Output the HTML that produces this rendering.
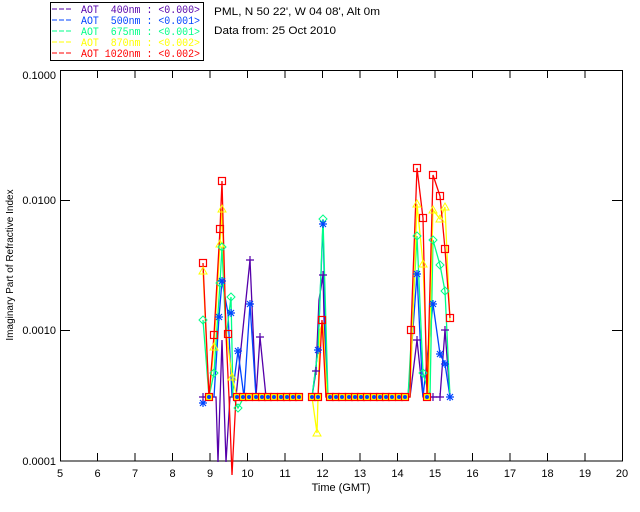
<!DOCTYPE html>
<html><head><meta charset="utf-8"><style>
html,body{margin:0;padding:0;background:#fff;}
svg{display:block;font-family:"Liberation Sans",sans-serif;}
</style></head><body>
<svg width="640" height="512" viewBox="0 0 640 512" xmlns="http://www.w3.org/2000/svg">
<defs>
<g id="sq"><rect x="-3.5" y="-3.5" width="7" height="7" fill="none" stroke="#f00" stroke-width="1.2"/></g>
<g id="tri"><path d="M0,-4 L4,3 L-4,3 Z" fill="none" stroke="#ff0" stroke-width="1"/></g>
<g id="dia"><path d="M0,-4 L4,0 L0,4 L-4,0 Z" fill="none" stroke="#0f8" stroke-width="1"/></g>
<g id="star"><path d="M-4,0 H4 M0,-4 V4 M-3,-3 L3,3 M-3,3 L3,-3" stroke="#04f" stroke-width="1.2"/></g>
<g id="plus"><path d="M-4,0 H4 M0,-4 V4" stroke="#50a" stroke-width="1.2"/></g>
<g id="base"><rect x="-3.5" y="-3.5" width="7" height="7" fill="#ff0" stroke="#f00" stroke-width="1.2"/><circle r="2" fill="#04f"/></g>
</defs>
<!-- legend -->
<rect x="50.5" y="2.5" width="153" height="58" fill="none" stroke="#000"/>
<g font-size="11" font-family="Liberation Mono, monospace">
<line x1="52" y1="9" x2="73" y2="9" stroke="#50a" stroke-dasharray="5,2"/>
<text x="81" y="13" fill="#50a" xml:space="preserve" textLength="119" lengthAdjust="spacingAndGlyphs">AOT  400nm : &lt;0.000&gt;</text>
<line x1="52" y1="20" x2="73" y2="20" stroke="#04f" stroke-dasharray="5,2"/>
<text x="81" y="24" fill="#04f" xml:space="preserve" textLength="119" lengthAdjust="spacingAndGlyphs">AOT  500nm : &lt;0.001&gt;</text>
<line x1="52" y1="31" x2="73" y2="31" stroke="#0f8" stroke-dasharray="5,2"/>
<text x="81" y="35" fill="#0f8" xml:space="preserve" textLength="119" lengthAdjust="spacingAndGlyphs">AOT  675nm : &lt;0.001&gt;</text>
<line x1="52" y1="42" x2="73" y2="42" stroke="#ff0" stroke-dasharray="5,2"/>
<text x="81" y="46" fill="#ff0" xml:space="preserve" textLength="119" lengthAdjust="spacingAndGlyphs">AOT  870nm : &lt;0.002&gt;</text>
<line x1="52" y1="53" x2="73" y2="53" stroke="#f00" stroke-dasharray="5,2"/>
<text x="81" y="57" fill="#f00" xml:space="preserve" textLength="119" lengthAdjust="spacingAndGlyphs">AOT 1020nm : &lt;0.002&gt;</text>
</g>
<g font-size="11">
<text x="214" y="15" fill="#000" textLength="166" lengthAdjust="spacingAndGlyphs">PML, N 50 22', W 04 08', Alt 0m</text>
<text x="214" y="34" fill="#000" textLength="122" lengthAdjust="spacingAndGlyphs">Data from: 25 Oct 2010</text>
</g>
<!-- axes -->
<rect x="60.5" y="70.5" width="562" height="390.5" fill="none" stroke="#000" stroke-width="1"/>
<g stroke="#000">
<path d="M97.5,461 v-8 M135,461 v-8 M172.5,461 v-8 M210,461 v-8 M247.5,461 v-8 M285,461 v-8 M322.5,461 v-8 M360,461 v-8 M397.5,461 v-8 M435,461 v-8 M472.5,461 v-8 M510,461 v-8 M547.5,461 v-8 M585,461 v-8"/>
<path d="M97.5,70 v8 M135,70 v8 M172.5,70 v8 M210,70 v8 M247.5,70 v8 M285,70 v8 M322.5,70 v8 M360,70 v8 M397.5,70 v8 M435,70 v8 M472.5,70 v8 M510,70 v8 M547.5,70 v8 M585,70 v8"/>
<path d="M60,200.5 h10 M60,330.5 h10 M622,200.5 h-10 M622,330.5 h-10"/>
</g>
<g font-size="11" fill="#000" text-anchor="end">
<text x="56" y="79">0.1000</text><text x="56" y="204">0.0100</text><text x="56" y="334">0.0010</text><text x="56" y="465">0.0001</text>
</g>
<g font-size="11" fill="#000" text-anchor="middle">
<text x="60" y="477">5</text><text x="97.5" y="477">6</text><text x="135" y="477">7</text><text x="172.5" y="477">8</text><text x="210" y="477">9</text><text x="247.5" y="477">10</text><text x="285" y="477">11</text><text x="322.5" y="477">12</text><text x="360" y="477">13</text><text x="397.5" y="477">14</text><text x="435" y="477">15</text><text x="472.5" y="477">16</text><text x="510" y="477">17</text><text x="547.5" y="477">18</text><text x="585" y="477">19</text><text x="622" y="477">20</text>
<text x="341" y="491">Time (GMT)</text>
<text transform="translate(13,265) rotate(-90)" font-size="10">Imaginary Part of Refractive Index</text>
</g>
<!-- data -->
<g fill="none" stroke-width="1.3">
<polyline stroke="#50a" points="203,397 216,397 218,462 222,340 226,462 230,397 236,397 250,260 256,397 260,337 266,397 300,397"/>
<polyline stroke="#50a" points="312,397 316,371 319,300 323,275 326,397 410,397 417,340 423,397 440,397 445,330 450,397"/>
<polyline stroke="#04f" points="203,403 210,397 214,397 219,317 222,281 228,313 232,397 238,351 244,397 250,304 256,397 300,397"/>
<polyline stroke="#04f" points="312,397 318,350 323,224 327,397 408,397 417,274 423,397 433,304 440,354 445,364 450,397"/>
<polyline stroke="#0f8" points="203,320 209,397 214,373 220,283 222,247 226,338 231,297 233,397 238,408 244,397 300,397"/>
<polyline stroke="#0f8" points="312,397 318,350 323,219 328,397 408,397 417,236 423,373 430,397 433,240 440,265 445,291 450,397"/>
<polyline stroke="#ff0" points="203,271 209,397 214,347 220,244 222,209 226,330 232,377 237,397 300,397"/>
<polyline stroke="#ff0" points="312,397 317,433 320,330 323,322 327,397 410,397 417,204 423,264 428,397 433,210 440,219 445,207 450,322"/>
<polyline stroke="#f00" points="203,263 209,397 214,335 220,229 222,181 226,334 229,397 232,475 236,397 300,397"/>
<polyline stroke="#f00" points="312,397 318,397 322,320 326,397 410,397 411,330 417,168 423,218 427,397 433,175 440,196 445,249 450,318"/>
</g>
<!-- markers -->
<g>
<use href="#sq" x="203" y="263"/><use href="#sq" x="214" y="335"/><use href="#sq" x="220" y="229"/><use href="#sq" x="222" y="181"/><use href="#sq" x="228" y="334"/><use href="#sq" x="322" y="320"/>
<use href="#sq" x="411" y="330"/><use href="#sq" x="417" y="168"/><use href="#sq" x="423" y="218"/><use href="#sq" x="433" y="175"/><use href="#sq" x="440" y="196"/><use href="#sq" x="445" y="249"/><use href="#sq" x="450" y="318"/>
<use href="#tri" x="203" y="271"/><use href="#tri" x="214" y="347"/><use href="#tri" x="220" y="244"/><use href="#tri" x="222" y="209"/><use href="#tri" x="232" y="377"/><use href="#tri" x="317" y="433"/>
<use href="#tri" x="417" y="204"/><use href="#tri" x="423" y="264"/><use href="#tri" x="433" y="210"/><use href="#tri" x="440" y="219"/><use href="#tri" x="445" y="207"/>
<use href="#dia" x="203" y="320"/><use href="#dia" x="214" y="373"/><use href="#dia" x="220" y="283"/><use href="#dia" x="222" y="247"/><use href="#dia" x="231" y="297"/><use href="#dia" x="238" y="408"/><use href="#dia" x="323" y="219"/>
<use href="#dia" x="417" y="236"/><use href="#dia" x="423" y="373"/><use href="#dia" x="433" y="240"/><use href="#dia" x="440" y="265"/><use href="#dia" x="445" y="291"/>
<use href="#star" x="203" y="403"/><use href="#star" x="219" y="317"/><use href="#star" x="222" y="281"/><use href="#star" x="231" y="313"/><use href="#star" x="238" y="351"/><use href="#star" x="250" y="304"/><use href="#star" x="318" y="350"/><use href="#star" x="323" y="224"/>
<use href="#star" x="417" y="274"/><use href="#star" x="433" y="304"/><use href="#star" x="440" y="354"/><use href="#star" x="445" y="364"/><use href="#star" x="450" y="397"/>
<use href="#plus" x="203" y="397"/><use href="#plus" x="250" y="260"/><use href="#plus" x="260" y="337"/><use href="#plus" x="316" y="371"/><use href="#plus" x="323" y="275"/><use href="#plus" x="417" y="340"/><use href="#plus" x="445" y="330"/><use href="#plus" x="433" y="397"/><use href="#plus" x="440" y="397"/>
<use href="#base" x="209" y="397"/><use href="#base" x="237" y="397"/><use href="#base" x="243" y="397"/><use href="#base" x="249" y="397"/><use href="#base" x="256" y="397"/><use href="#base" x="262" y="397"/><use href="#base" x="268" y="397"/><use href="#base" x="274" y="397"/><use href="#base" x="281" y="397"/><use href="#base" x="287" y="397"/><use href="#base" x="293" y="397"/><use href="#base" x="299" y="397"/>
<use href="#base" x="312" y="397"/><use href="#base" x="318" y="397"/>
<use href="#base" x="330" y="397"/><use href="#base" x="336" y="397"/><use href="#base" x="342" y="397"/><use href="#base" x="349" y="397"/><use href="#base" x="355" y="397"/><use href="#base" x="361" y="397"/><use href="#base" x="367" y="397"/><use href="#base" x="374" y="397"/><use href="#base" x="380" y="397"/><use href="#base" x="386" y="397"/><use href="#base" x="392" y="397"/><use href="#base" x="399" y="397"/><use href="#base" x="405" y="397"/><use href="#base" x="427" y="397"/>
</g>
</svg>
</body></html>
